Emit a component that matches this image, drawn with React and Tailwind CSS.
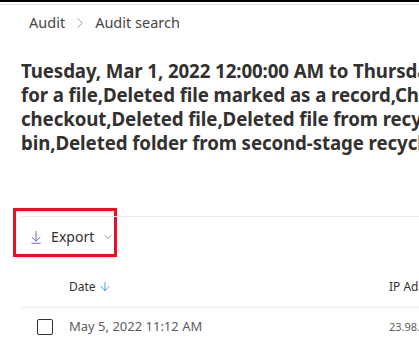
import { ArrowDown, ChevronDown, ChevronRight } from 'lucide-react';

const titleLines = [
  'Tuesday, Mar 1, 2022 12:00:00 AM to Thursday, May 5, 2022 12:00:00 AM',
  'for a file,Deleted file marked as a record,Checked in file,Checked out',
  'checkout,Deleted file,Deleted file from recycle bin,Deleted file from',
  'bin,Deleted folder from second-stage recycle bin',
];

const App = () => {
  return (
    <div
      className="w-[419px] h-[345px] overflow-hidden bg-white text-[#323130]"
      style={{ fontFamily: '"Segoe UI", "Noto Sans", "Open Sans", sans-serif' }}
    >
      {/* top strip */}
      <div className="h-[2px] bg-black" />
      <div className="h-[2px]" />
      <div className="h-px bg-[#e1dfdd]" />

      {/* Breadcrumb */}
      <div className="flex items-center pl-[29px] pt-[1px] h-[34px] text-[14.5px] text-[#484644]">
        <span>Audit</span>
        <ChevronRight className="w-[18px] h-[18px] mx-[6px] text-[#8a8886]" strokeWidth={1.1} />
        <span>Audit search</span>
      </div>

      {/* Title */}
      <div className="pl-[21px] pt-[20px] font-bold text-[18.7px] leading-[24px] tracking-[-0.1px] text-[#323130]">
        {titleLines.map((line) => (
          <div key={line} className="whitespace-nowrap">
            {line}
          </div>
        ))}
      </div>

      {/* Command bar */}
      <div className="mt-[53px] ml-[13px] w-[104px] h-[49px] border-[3px] border-[#e81123] relative">
        <div className="absolute left-[5px] right-[-320px] top-[5px] h-px bg-[#edebe9]" />
        <div className="flex items-center pl-[15px] pt-[15px] text-[14px] text-[#323130]">
          <svg className="w-[12px] h-[16px] text-[#4f52b2]" viewBox="0 0 12 16" fill="none" stroke="currentColor" strokeWidth="1">
            <path d="M6 1v12M1 8l5 5 5-5M0.5 15.5h11" />
          </svg>
          <span className="ml-[10px]">Export</span>
          <ChevronDown className="w-[14px] h-[14px] ml-[8px] text-[#484644]" strokeWidth={1.2} />
        </div>
      </div>

      {/* Table header */}
      <div className="flex items-center h-[51px] ml-[21px] border-b border-[#edebe9] text-[12px] text-[#323130]">
        <div className="flex items-center pl-[48px] w-[368px] shrink-0 pt-[9px]">
          <span>Date</span>
          <ArrowDown className="w-[14px] h-[15px] ml-[2px] text-[#0078d4]" strokeWidth={1.2} />
        </div>
        <div className="pt-[9px] whitespace-nowrap">IP Address</div>
      </div>

      {/* Row */}
      <div className="flex items-center h-[38px] ml-[21px] text-[#605e5c]">
        <div className="w-[16px] h-[16px] shrink-0 border border-[#323130] rounded-[2px] ml-[16px]" />
        <div className="ml-[16px] w-[320px] shrink-0 text-[13px]">May 5, 2022 11:12 AM</div>
        <div className="text-[11px] whitespace-nowrap">23.98.142.180</div>
      </div>
    </div>
  );
};

export default App;
